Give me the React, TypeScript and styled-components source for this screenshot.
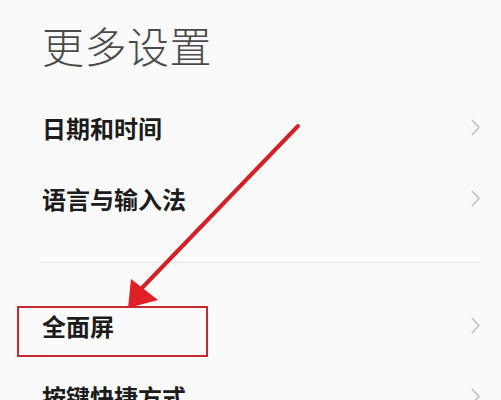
import { FC } from 'react';
import styled, { createGlobalStyle } from 'styled-components';

const GlobalStyle = createGlobalStyle`
  html, body {
    margin: 0;
    padding: 0;
    background: #fafafa;
  }
  body {
    font-family: "Noto Sans CJK SC", "Noto Sans", sans-serif;
    overflow: hidden;
  }
`;

type Item = { label: string };

const FIRST: Item[] = [{ label: '日期和时间' }, { label: '语言与输入法' }];
const SECOND: Item[] = [{ label: '全面屏' }, { label: '按键快捷方式' }];

const Chevron: FC = () => (
  <svg width="9" height="17" viewBox="0 0 9 17">
    <polyline points="1,1 8,8.5 1,16" fill="none" stroke="#bdbdbd" strokeWidth="1.4" />
  </svg>
);

const Row: FC<Item> = ({ label }) => (
  <RowWrap>
    <Label>{label}</Label>
    <Chevron />
  </RowWrap>
);

export default function App() {
  return (
    <>
      <GlobalStyle />
      <Page>
        <Title>更多设置</Title>
        {FIRST.map((i) => (
          <Row key={i.label} label={i.label} />
        ))}
        <Divider />
        {SECOND.map((i) => (
          <Row key={i.label} label={i.label} />
        ))}
        <Highlight />
        <Arrow width="501" height="400" viewBox="0 0 501 400">
          <line x1="298" y1="126" x2="141" y2="289" stroke="#d42026" strokeWidth="4" strokeLinecap="round" />
          <polygon points="128,308 131,279 158,300" fill="#e01f26" />
        </Arrow>
      </Page>
    </>
  );
}

const Page = styled.div`
  position: relative;
  width: 501px;
  height: 400px;
  overflow: hidden;
  padding: 0 21px 0 42px;
  box-sizing: border-box;
`;

const Title = styled.div`
  height: 92px;
  padding-bottom: 4px;
  box-sizing: border-box;
  display: flex;
  align-items: center;
  font-size: 42px;
  font-weight: 300;
  color: #4a4a4a;
  letter-spacing: 0.5px;
`;

const RowWrap = styled.div`
  height: 71px;
  display: flex;
  align-items: center;
  justify-content: space-between;
`;

const Label = styled.span`
  font-size: 24px;
  font-weight: 700;
  color: #1c1c1c;
`;

const Divider = styled.div`
  height: 56px;
  margin-left: -2px;
  display: flex;
  align-items: center;
  &::after {
    content: '';
    flex: 1;
    height: 1px;
    background: #e6e6e6;
  }
`;

const Highlight = styled.div`
  position: absolute;
  left: 17px;
  top: 306px;
  width: 191px;
  height: 51px;
  box-sizing: border-box;
  border: 2px solid #c42a30;
`;

const Arrow = styled.svg`
  position: absolute;
  left: 0;
  top: 0;
  pointer-events: none;
`;
